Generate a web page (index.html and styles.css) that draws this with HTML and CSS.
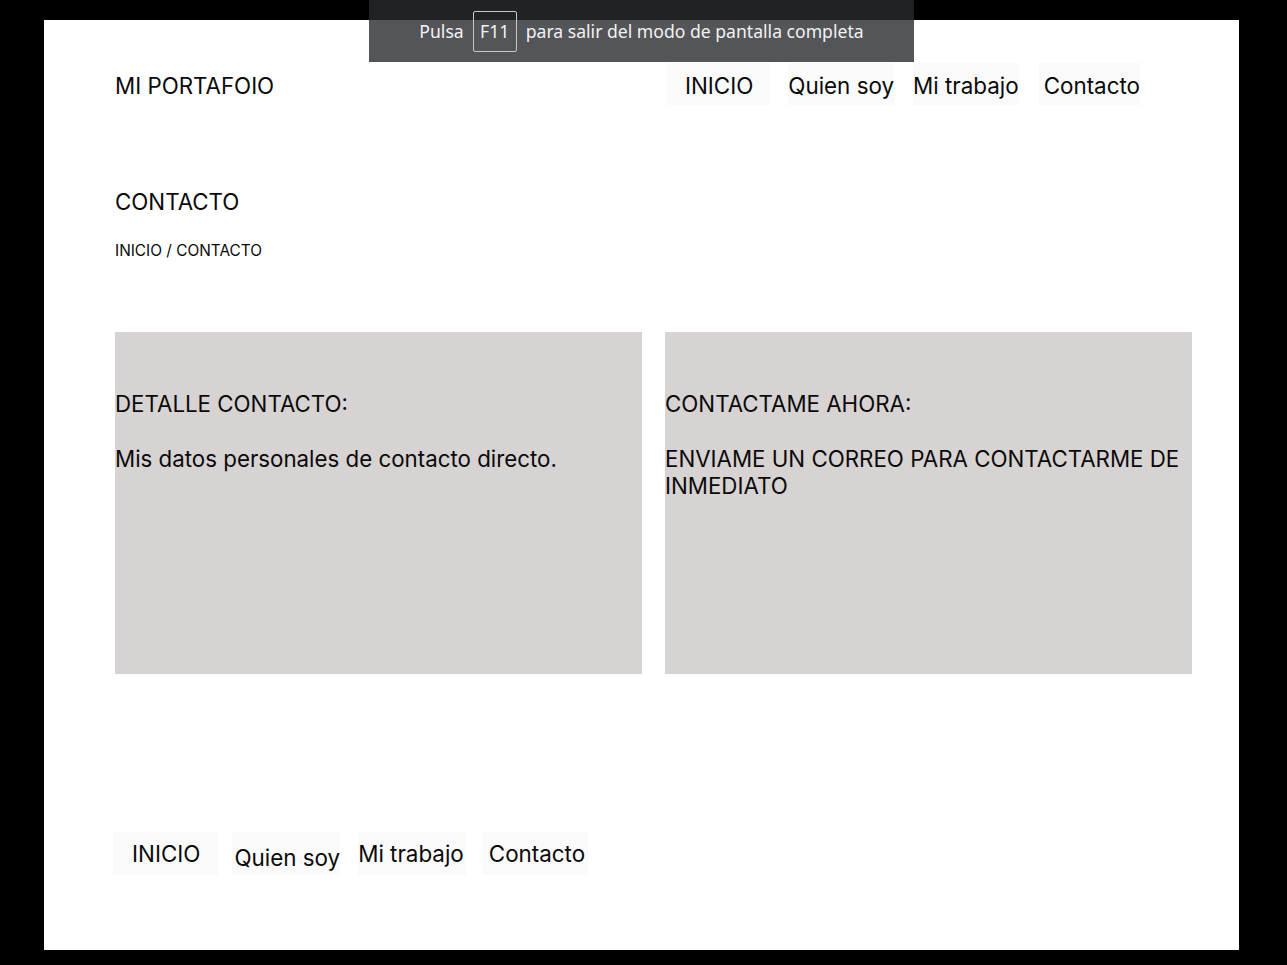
FILE: index.html
```html
<!DOCTYPE html>
<html lang="es">
<head>
<meta charset="utf-8">
<title>Contacto - Mi Portafoio</title>
<link rel="stylesheet" href="styles.css">
</head>
<body>
<div class="page">
  <header class="header">
    <div class="logo">MI PORTAFOIO</div>
    <nav class="nav">
      <a class="nav-item item-inicio">INICIO</a>
      <a class="nav-item item-quien">Quien soy</a>
      <a class="nav-item item-trabajo">Mi trabajo</a>
      <a class="nav-item item-contacto">Contacto</a>
    </nav>
  </header>

  <section class="title-block">
    <h1 class="title">CONTACTO</h1>
    <p class="crumbs">INICIO / CONTACTO</p>
  </section>

  <section class="cards">
    <div class="card">
      <h2 class="card-title">DETALLE CONTACTO:</h2>
      <p class="card-text">Mis datos personales de contacto directo.</p>
    </div>
    <div class="card">
      <h2 class="card-title">CONTACTAME AHORA:</h2>
      <p class="card-text">ENVIAME UN CORREO PARA CONTACTARME DE INMEDIATO</p>
    </div>
  </section>

  <footer class="footer">
    <nav class="nav footer-nav">
      <a class="nav-item fitem-inicio">INICIO</a>
      <a class="nav-item fitem-quien">Quien soy</a>
      <a class="nav-item fitem-trabajo">Mi trabajo</a>
      <a class="nav-item fitem-contacto">Contacto</a>
    </nav>
  </footer>
</div>

<div class="toast">
  <span class="toast-text">Pulsa</span>
  <span class="key">F11</span>
  <span class="toast-text">para salir del modo de pantalla completa</span>
</div>
</body>
</html>
```

FILE: styles.css
```css
* {
  box-sizing: border-box;
}

html, body {
  margin: 0;
  padding: 0;
  background: #000;
  height: 965px;
  overflow: hidden;
}

body {
  font-family: Inter, "Noto Sans", sans-serif;
  color: #0a0a0a;
}

.page {
  background: #fff;
  margin: 20px 0 0 44px;
  width: 1195px;
  height: 930px;
  padding: 43px 47px 0 71px;
}

.header {
  display: flex;
  align-items: center;
  justify-content: space-between;
  height: 42px;
  padding-right: 52px;
}

.logo {
  font-size: 22.3px;
  margin-top: 2px;
}

.nav {
  display: flex;
  align-items: stretch;
  height: 42px;
}

.nav-item {
  display: flex;
  align-items: center;
  background: #fafafa;
  font-size: 22.4px;
  color: #0a0a0a;
  text-decoration: none;
  padding-top: 2px;
}

.item-inicio { padding: 2px 17px 0 18px; }
.item-quien { margin-left: 18px; padding: 2px 0 0; }
.item-trabajo { margin-left: 19px; padding: 2px 0 0; }
.item-contacto { margin-left: 20px; padding: 2px 0 0 5px; }

.title-block {
  margin-top: 83px;
}

.title {
  margin: 0;
  font-size: 22.3px;
  font-weight: 400;
  line-height: 27px;
}

.crumbs {
  margin: 27px 0 0;
  font-size: 15.4px;
  line-height: 18px;
}

.cards {
  display: grid;
  grid-template-columns: 527px 527px;
  column-gap: 23px;
  margin-top: 72px;
}

.card {
  background: #d6d3d2;
  height: 342px;
  padding-top: 58px;
}

.card-title {
  margin: 0;
  font-size: 22.3px;
  font-weight: 400;
  line-height: 27px;
}

.card-text {
  margin: 28px 0 0;
  font-size: 22.3px;
  line-height: 27px;
  padding-right: 8px;
}

.footer {
  margin-top: 158px;
}

.footer-nav {
  height: 43px;
}

.fitem-inicio { margin-left: -2px; padding: 0 18px 0 19px; }
.fitem-quien { margin-left: 14px; padding: 8px 0 0 2px; }
.fitem-trabajo { margin-left: 18px; padding: 0 2px 0 0; }
.fitem-contacto { margin-left: 16px; padding: 0 3px 0 7px; }

.toast {
  position: absolute;
  left: 369px;
  top: 0;
  width: 545px;
  height: 62px;
  background: rgba(40, 42, 46, 0.8);
  display: flex;
  align-items: center;
  justify-content: center;
  gap: 9px;
  font-family: "Noto Sans", "Open Sans", sans-serif;
  font-size: 17.6px;
  color: #f2f2f2;
}

.key {
  display: flex;
  align-items: center;
  justify-content: center;
  width: 44px;
  height: 41px;
  border: 1px solid #c8c8c8;
  border-radius: 2px;
}
```
